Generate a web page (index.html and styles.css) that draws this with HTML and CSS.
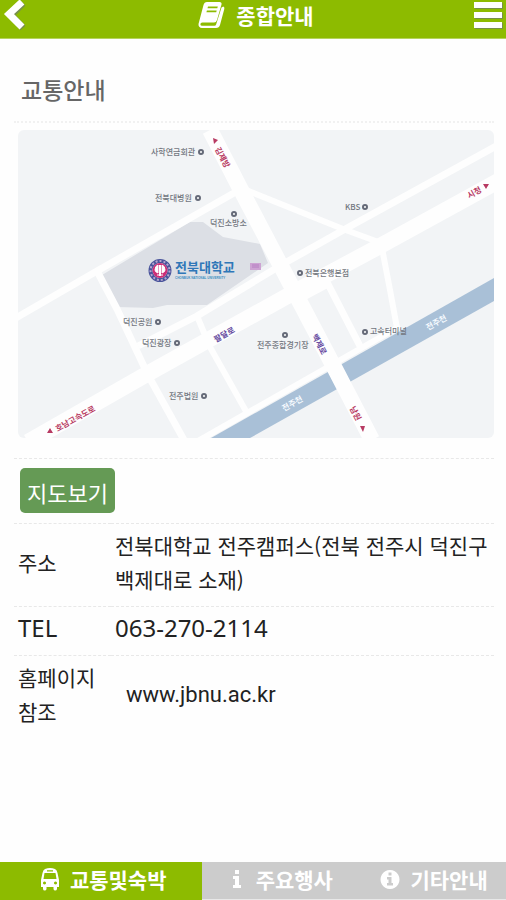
FILE: index.html
```html
<!DOCTYPE html>
<html lang="ko">
<head>
<meta charset="utf-8">
<meta name="viewport" content="width=device-width, initial-scale=1">
<title>종합안내</title>
<link rel="stylesheet" href="styles.css">
</head>
<body>
<header class="topbar">
  <button class="icon-button" type="button" aria-label="뒤로">
    <svg class="icon-back" viewBox="0 0 22 34"><path class="shadow" d="M20 5 8 17l12 13"/><path d="M19 4 6 16l13 13"/></svg>
  </button>
  <h1 class="topbar-title">
    <svg class="icon-book" viewBox="0 0 28 28"><path fill-rule="evenodd" d="M9 1h12.500q2.500 0 2 2.500L19 19q-.7 2.500-3 2.500H4.500q-2.500 0-2 2.500.2.700 1.500.700h12.500q1.200 0 1.600-1.200L23.500 6.500 25.300 5.500q1.500.500 1 2.500L22 24q-.8 3-4 3H4q-3.700-.3-3.500-4L5.500 4Q6.300 1 9 1zM10 5.500l-.5 1.700h9.800l.5-1.700zM8.900 9.500l-.5 1.700h9.800l.5-1.700z"/></svg>
    <span>종합안내</span>
  </h1>
  <button class="icon-button" type="button" aria-label="메뉴">
    <svg class="icon-menu" viewBox="0 0 30 28"><path class="shadow" d="M2 5h28M2 15h28M2 25h28"/><path d="M1 4h28M1 14h28M1 24h28"/></svg>
  </button>
</header>

<main class="content">
  <h2 class="page-heading">교통안내</h2>
  <figure class="map-frame">
    <svg class="map" viewBox="18 130 476 308" role="img" aria-label="전북대학교 약도">
      <rect class="land" x="18" y="130" width="476" height="308"/>
      <path class="campus" d="M102 275 190 222h13l20 15 37 7 8 19-61 42h-40l-14 3-36-1z"/>
      <path class="river" d="M211 438 494 278v23L250 438z"/>
      <g class="roads">
        <path class="road-wide" d="M210 130 241 190 333 365 372 440"/>
        <path class="road-wide" d="M28 442 147 374 300 289 380 246 500 180"/>
        <path class="road" d="M14 319 97 271 241 189"/>
        <path class="road" d="M500 144 347 228 283 264 197 316 138 346"/>
        <path class="road-thin" d="M241 188 343 229 381 243 390 290 397 328"/>
        <path class="road" d="M97 271 117 309 148 375 184 440"/>
        <path class="road-thin" d="M197 316 210 347 247 413"/>
        <path class="road" d="M300 299 328 284 361 348"/>
        <path class="road-thin" d="M198 441 400 326"/>
      </g>
      <g class="places">
        <text x="151" y="155">사학연금회관</text><circle cx="201" cy="152" r="2"/>
        <text x="155" y="201">전북대병원</text><circle cx="198" cy="198" r="2"/>
        <text x="210" y="226">덕진소방소</text><circle cx="234" cy="214" r="2"/>
        <text x="345" y="210">KBS</text><circle cx="365" cy="207" r="2"/>
        <text x="305" y="276">전북은행본점</text><circle cx="300" cy="273" r="2"/>
        <text x="123" y="325">덕진공원</text><circle cx="158" cy="322" r="2"/>
        <text x="142" y="346">덕진광장</text><circle cx="177" cy="343" r="2"/>
        <text x="257" y="348">전주종합경기장</text><circle cx="285" cy="335" r="2"/>
        <text x="370" y="334">고속터미널</text><circle cx="365" cy="332" r="2"/>
        <text x="169" y="399">전주법원</text><circle cx="204" cy="396" r="2"/>
      </g>
      <g class="street">
        <text transform="translate(224 334) rotate(-29)">팔달로</text>
        <text transform="translate(320 344) rotate(63)">백제로</text>
      </g>
      <g class="directions">
        <text transform="translate(223 157) rotate(62)">김제방</text>
        <text transform="translate(474 192) rotate(-29)">시청</text>
        <text transform="translate(75 418) rotate(-29)">호남고속도로</text>
        <text transform="translate(356 413) rotate(62)">남원</text>
        <path d="m213 138 5 2-4 4zM483 184h6l-3 5zM50 428l3 5-6 0zM360 426l5 0-2 6z"/>
      </g>
      <g class="water-name">
        <text transform="translate(292 403) rotate(-29)">전주천</text>
        <text transform="translate(436 322) rotate(-29)">전주천</text>
      </g>
      <g class="emblem">
        <circle class="emblem-rim" cx="160" cy="270.500" r="9.500"/>
        <circle class="emblem-letters" cx="160" cy="270.500" r="9.500"/>
        <circle class="emblem-core" cx="160" cy="270.500" r="7.500"/>
        <path d="M155 270q0-4 3-5v8q-3-1-3-3zM165 270q0-4-3-5v8q3-1 3-3zM159.500 265v11M160.500 265v11M157 275h6"/>
      </g>
      <text class="school" x="175" y="272">전북대학교</text>
      <text class="school-en" x="175" y="279">CHONBUK NATIONAL UNIVERSITY</text>
      <path class="gate" d="M250 263h11v7h-11z"/>
      <path class="gate-lines" d="M252 265h7M252 267h7"/>
    </svg>
  </figure>
  <div class="map-action">
    <button class="map-button" type="button">지도보기</button>
  </div>
  <table class="info">
    <tbody>
      <tr><th scope="row">주소</th><td>전북대학교 전주캠퍼스(전북 전주시 덕진구 백제대로 소재)</td></tr>
      <tr class="latin"><th scope="row">TEL</th><td>063-270-2114</td></tr>
      <tr><th scope="row">홈페이지 참조</th><td><a class="site-link" href="http://www.jbnu.ac.kr">www.jbnu.ac.kr</a></td></tr>
    </tbody>
  </table>
</main>

<nav class="tabs">
  <a class="tab tab-active" href="#traffic">
    <svg class="tab-icon" viewBox="0 0 20 23"><path fill-rule="evenodd" d="M5 1Q10-1 15 1q2 1 2.500 4l1.500 7v7h-2v2q-.3 1.500-1.800 1.500T13.500 21v-2h-7v2q-.3 1.500-1.800 1.500T3 21v-2H1v-7l1.500-7Q3 2 5 1zM7 2.200v1.300h6V2.200zM4.500 5 3.500 11h13l-1-6zM4.500 13.500a1.500 1.500 0 1 0 .01 0zM15.500 13.500a1.500 1.500 0 1 0 .01 0z"/></svg>
    <span>교통및숙박</span>
  </a>
  <a class="tab" href="#events">
    <svg class="tab-icon tab-icon-info" viewBox="0 0 10 20"><path d="M3 1h4v4H3zM1 7h6v9h2v3H1v-3h2v-6H1z"/></svg>
    <span>주요행사</span>
  </a>
  <a class="tab" href="#etc">
    <svg class="tab-icon" viewBox="0 0 20 23"><path fill-rule="evenodd" d="M10 2a9.500 9.500 0 1 0 .01 0zM8.500 4.500h3v3h-3zM7 9h4.500v6H13v2.500H7V15h1.500v-3.500H7z"/></svg>
    <span>기타안내</span>
  </a>
</nav>
</body>
</html>
```
FILE: styles.css
```css
* { box-sizing: border-box; }

body {
  margin: 0;
  min-height: 100vh;
  display: flex;
  flex-direction: column;
  background: #fefefe;
  color: #222;
  font-family: "Noto Sans CJK KR", sans-serif;
  font-size: 21px;
  line-height: 34px;
}

button { border: 0; font: inherit; cursor: pointer; }

.topbar {
  display: flex;
  justify-content: space-between;
  align-items: center;
  height: 39px;
  padding: 0 3px 8px;
  background: #8dbb00;
  border-bottom: 1px solid #b5d35c;
}
.topbar-title {
  display: flex;
  align-items: center;
  gap: 10px;
  margin: 0;
  padding-left: 14px;
  color: #fff;
  font-size: 21px;
  font-weight: 700;
  line-height: 30px;
}
.icon-button { display: flex; padding: 0; background: none; }
.icon-button path { fill: none; stroke: #fff; stroke-width: 6; }
.icon-button .shadow { stroke: #78904c; }
.icon-back { width: 22px; height: 34px; }
.icon-back path { stroke-width: 7; }
.icon-menu { width: 30px; height: 28px; }
.icon-book { width: 28px; height: 28px; fill: #fff; }

.content { flex: 1; padding: 0 12px 0 14px; }

.page-heading {
  margin: 0;
  padding: 33px 7px 15px;
  color: #666;
  font-size: 23px;
  font-weight: 500;
  line-height: 34px;
  border-bottom: 2px dotted #f1f1f1;
}

.map-frame { margin: 0; padding: 7px 0 20px 4px; }
.map { display: block; width: 100%; border-radius: 6px; }
.map text { font-size: 8px; text-anchor: start; }
.land { fill: #f2f4f6; }
.campus { fill: #dcdfe5; }
.river { fill: #a9c0d7; }
.roads path { fill: none; stroke: #fefefe; stroke-linejoin: round; }
.roads .road-wide { stroke-width: 16; }
.roads .road { stroke-width: 7; }
.roads .road-thin { stroke-width: 6; }
.places text { fill: #73777f; font-weight: 500; }
.places circle { fill: #fff; stroke: #656a78; stroke-width: 2; }
.map .street text, .map .directions text, .map .water-name text { font-weight: 700; text-anchor: middle; dominant-baseline: central; }
.street { fill: #654aa0; }
.directions { fill: #b83b63; }
.water-name { fill: #f7fbff; }
.emblem-rim { fill: #fff; stroke: #49549b; stroke-width: 4; }
.emblem-letters { fill: none; stroke: #b5a6cf; stroke-width: 2; stroke-dasharray: 2 2; }
.emblem-core { fill: #cc2f77; }
.emblem path { fill: #fff; stroke: #fff; stroke-width: 1; }
.map .school { fill: #2f77b8; font-size: 13px; font-weight: 700; }
.map .school-en { fill: #3f8fc4; font-family: "Liberation Sans", sans-serif; font-size: 3px; font-weight: 700; }
.gate { fill: #cda3d3; }
.gate-lines { stroke: #b67fc2; stroke-width: 1; }

.map-action {
  padding: 9px 6px 10px;
  border-top: 1px dashed #e8e8e8;
}
.map-button {
  display: block;
  padding: 7px 7px 4px;
  border-radius: 5px;
  background: #659a55;
  color: #fff;
  font-size: 22px;
  line-height: 34px;
}

.info { width: 100%; border-collapse: collapse; }
.info th, .info td {
  padding: 4px 4px 10px;
  border-top: 1px dashed #e8e8e8;
  font-weight: 400;
  text-align: left;
  vertical-align: middle;
}
.info th { width: 97px; }
.info .latin th, .info .latin td {
  font-family: "Noto Sans", sans-serif;
  font-size: 24px;
}
.site-link {
  padding-left: 11px;
  color: inherit;
  font-family: Roboto, sans-serif;
  font-size: 22px;
  text-decoration: none;
}

.tabs {
  display: grid;
  grid-template-columns: 4fr 3fr 3fr;
  height: 38px;
  background: #ccc;
  border-bottom: 1px solid #e8e8e8;
}
.tab {
  display: flex;
  justify-content: center;
  align-items: center;
  gap: 10px;
  padding: 0 0 4px 8px;
  color: #fff;
  font-weight: 700;
  text-decoration: none;
}
.tab-active { padding-left: 4px; background: #8dbb00; }
.tab-icon { width: 20px; height: 23px; fill: currentColor; }
.tab-icon-info { width: 10px; height: 20px; margin-right: 4px; }
```
